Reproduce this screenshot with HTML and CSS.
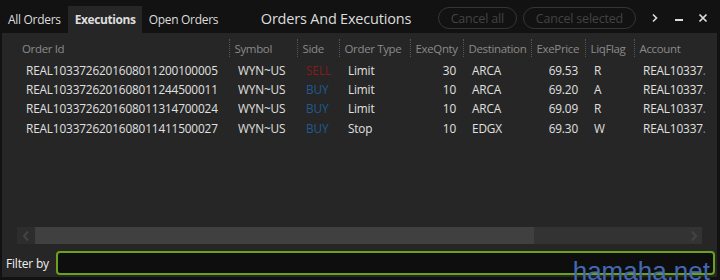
FILE: index.html
```html
<!DOCTYPE html>
<html lang="en">
<head>
    <meta charset="UTF-8">
    <title>Orders And Executions</title>
    <link rel="stylesheet" href="styles.css">
</head>
<body>
    <div class="window">
        <header class="title-bar">
            <nav class="tabs">
                <span class="tab">All Orders</span>
                <span class="tab tab-active">Executions</span>
                <span class="tab">Open Orders</span>
            </nav>
            <div class="title">Orders And Executions</div>
            <div class="actions">
                <button class="pill">Cancel all</button>
                <button class="pill">Cancel selected</button>
            </div>
            <div class="win-icons">
                <svg width="10" height="10" viewBox="0 0 10 10"><path d="M3 1.5 L6.5 5 L3 8.5" fill="none" stroke="#ddd" stroke-width="1.6"/></svg>
                <svg width="10" height="10" viewBox="0 0 10 10"><rect x="1" y="6" width="8" height="2" fill="#ddd"/></svg>
                <svg width="10" height="10" viewBox="0 0 10 10"><path d="M1.5 1.5 L8.5 8.5 M8.5 1.5 L1.5 8.5" stroke="#ddd" stroke-width="1.7"/></svg>
            </div>
        </header>

        <section class="panel">
            <div class="grid-wrap">
                <table class="grid">
                    <colgroup>
                        <col class="c-id">
                        <col class="c-sym">
                        <col class="c-side">
                        <col class="c-type">
                        <col class="c-qty">
                        <col class="c-dest">
                        <col class="c-price">
                        <col class="c-liq">
                        <col class="c-acct">
                    </colgroup>
                    <thead>
                        <tr>
                            <th class="first">Order Id</th>
                            <th>Symbol</th>
                            <th>Side</th>
                            <th>Order Type</th>
                            <th>ExeQnty</th>
                            <th>Destination</th>
                            <th>ExePrice</th>
                            <th>LiqFlag</th>
                            <th>Account</th>
                        </tr>
                    </thead>
                    <tbody>
                        <tr>
                            <td>REAL1033726201608011200100005</td>
                            <td>WYN~US</td>
                            <td class="sell">SELL</td>
                            <td>Limit</td>
                            <td class="num">30</td>
                            <td>ARCA</td>
                            <td class="num">69.53</td>
                            <td>R</td>
                            <td>REAL10337<span class="dot">.</span></td>
                        </tr>
                        <tr>
                            <td>REAL1033726201608011244500011</td>
                            <td>WYN~US</td>
                            <td class="buy">BUY</td>
                            <td>Limit</td>
                            <td class="num">10</td>
                            <td>ARCA</td>
                            <td class="num">69.20</td>
                            <td>A</td>
                            <td>REAL10337<span class="dot">.</span></td>
                        </tr>
                        <tr>
                            <td>REAL1033726201608011314700024</td>
                            <td>WYN~US</td>
                            <td class="buy">BUY</td>
                            <td>Limit</td>
                            <td class="num">10</td>
                            <td>ARCA</td>
                            <td class="num">69.09</td>
                            <td>R</td>
                            <td>REAL10337<span class="dot">.</span></td>
                        </tr>
                        <tr>
                            <td>REAL1033726201608011411500027</td>
                            <td>WYN~US</td>
                            <td class="buy">BUY</td>
                            <td>Stop</td>
                            <td class="num">10</td>
                            <td>EDGX</td>
                            <td class="num">69.30</td>
                            <td>W</td>
                            <td>REAL10337<span class="dot">.</span></td>
                        </tr>
                    </tbody>
                </table>
            </div>

            <div class="hscroll">
                <div class="hs-btn">
                    <svg width="8" height="12" viewBox="0 0 8 12"><path d="M6 1.5 L2 6 L6 10.5" fill="none" stroke="#444" stroke-width="2"/></svg>
                </div>
                <div class="hs-thumb"></div>
                <div class="hs-track">
                    <svg width="8" height="12" viewBox="0 0 8 12"><path d="M2 1.5 L6 6 L2 10.5" fill="none" stroke="#444" stroke-width="2"/></svg>
                </div>
            </div>

            <div class="filter-row">
                <label for="filter">Filter by</label>
                <input id="filter" type="text">
            </div>
        </section>

        <div class="watermark">hamaha.net</div>
    </div>
</body>
</html>
```

FILE: styles.css
```css
* {
    box-sizing: border-box;
}

body {
    margin: 0;
    background-color: #121212;
    font-family: "Open Sans", "Noto Sans", sans-serif;
    color: #ddd;
}

.window {
    position: relative;
    width: 720px;
    height: 280px;
    overflow: hidden;
    background-color: #121212;
}

.title-bar {
    display: flex;
    align-items: flex-end;
    height: 33px;
    padding-left: 2px;
}

.tabs {
    display: flex;
    align-items: stretch;
    height: 27px;
}

.tab {
    display: flex;
    align-items: center;
    padding: 0 6px;
    font-size: 12px;
    letter-spacing: -0.3px;
    color: #ddd;
}

.tab-active {
    background-color: #262626;
    font-weight: bold;
    margin: 0 1px;
    padding: 0 6px 0 7px;
    letter-spacing: -0.4px;
}

.title {
    flex: 1;
    text-align: center;
    font-size: 14.5px;
    letter-spacing: -0.2px;
    color: #ddd;
    align-self: center;
    padding: 3px 0 0 10px;
}

.actions {
    display: flex;
    gap: 6px;
    align-self: center;
    padding-top: 3px;
}

.pill {
    height: 22px;
    padding: 0 12px;
    border: 1.5px solid #353535;
    border-radius: 11px;
    background: transparent;
    color: #434343;
    font-family: "Open Sans", "Noto Sans", sans-serif;
    font-size: 12.5px;
    letter-spacing: -0.2px;
}

.win-icons {
    display: flex;
    align-items: center;
    gap: 14px;
    align-self: center;
    padding: 3px 12px 0 14px;
}

.panel {
    margin: 0 3px 3px 2px;
    height: 244px;
    background-color: #262626;
    display: flex;
    flex-direction: column;
}

.grid-wrap {
    flex: 1;
    padding: 6px 0 0 15px;
    overflow: hidden;
}

.grid {
    border-collapse: collapse;
    table-layout: fixed;
    width: 690px;
    font-size: 11.8px;
    letter-spacing: -0.15px;
}

.c-id { width: 212px; }
.c-sym { width: 68px; }
.c-side { width: 42px; }
.c-type { width: 71px; }
.c-qty { width: 53px; }
.c-dest { width: 68px; }
.c-price { width: 54px; }
.c-liq { width: 49px; }
.c-acct { width: 73px; }

.grid th {
    height: 18px;
    padding: 0 0 0 5px;
    text-align: left;
    font-weight: normal;
    font-size: 11.5px;
    letter-spacing: -0.35px;
    color: #8a8a8a;
    border-left: 1px dotted #555;
    white-space: nowrap;
    overflow: hidden;
}

.grid th.first {
    border-left: none;
}

.grid tbody tr:first-child td {
    padding-top: 3px;
    height: 22px;
}

.grid td {
    height: 19.5px;
    padding: 0 0 0 9px;
    white-space: nowrap;
    overflow: hidden;
    color: #e0e0e0;
}

.grid td.num {
    text-align: right;
    padding: 0 7px 0 0;
}

.grid td.sell {
    color: #861a1a;
}

.grid td.buy {
    color: #1f5b8e;
}

.dot {
    color: #5b8cc4;
}

.hscroll {
    display: flex;
    height: 17px;
    margin: 0 15px 7px 15px;
}

.hs-btn {
    width: 18px;
    background-color: #2d2d2d;
    display: flex;
    align-items: center;
    justify-content: center;
}

.hs-thumb {
    width: 499px;
    background-color: #404040;
}

.hs-track {
    flex: 1;
    background-color: #333;
    display: flex;
    align-items: center;
    justify-content: flex-end;
    padding-right: 4px;
}

.filter-row {
    display: flex;
    align-items: center;
    height: 26px;
    padding: 0 2px 2px 4px;
}

.filter-row label {
    font-size: 12px;
    letter-spacing: -0.2px;
    color: #eee;
    width: 50px;
}

.filter-row input {
    flex: 1;
    height: 24px;
    border: 2px solid #6aa21e;
    border-radius: 4px;
    background-color: #0e0e0e;
    color: #eee;
    outline: none;
}

.watermark {
    position: absolute;
    right: 10px;
    bottom: -7px;
    font-family: "Liberation Sans", Arial, sans-serif;
    font-size: 26px;
    color: #4369b3;
}
```
